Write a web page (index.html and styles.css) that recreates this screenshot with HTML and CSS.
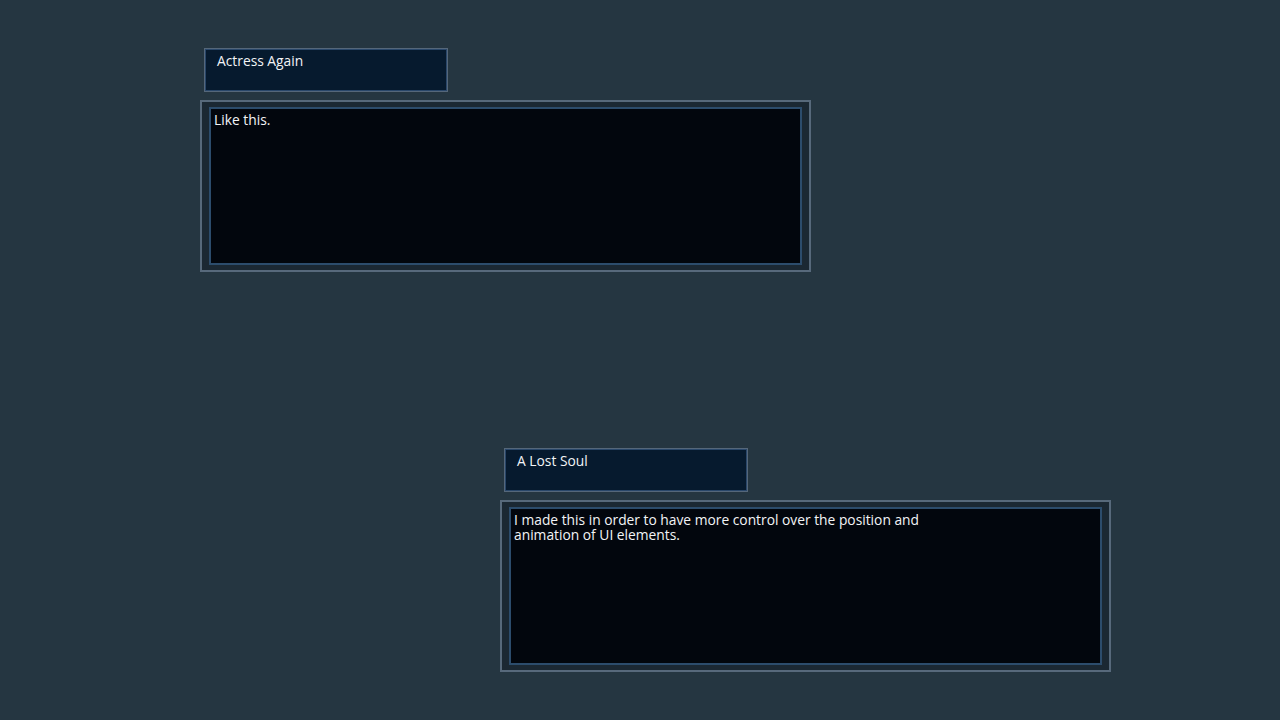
FILE: index.html
```html
<!DOCTYPE html>
<html>
<head>
<meta charset="utf-8">
<link rel="stylesheet" href="styles.css">
</head>
<body>
<main class="scene">
  <section class="dialogue first">
    <div class="name">Actress Again</div>
    <div class="box">
      <div class="text">Like this.</div>
    </div>
  </section>
  <section class="dialogue second">
    <div class="name">A Lost Soul</div>
    <div class="box">
      <div class="text">I made this in order to have more control over the position and<br>animation of UI elements.</div>
    </div>
  </section>
</main>
</body>
</html>
```
FILE: styles.css
```css
html, body {
  margin: 0;
  padding: 0;
  background: #253641;
  width: 1280px;
  height: 720px;
  overflow: hidden;
}
.scene {
  display: flex;
  flex-direction: column;
  padding-top: 48px;
  font-family: "Open Sans", "DejaVu Sans", sans-serif;
  font-size: 13.8px;
  line-height: 15px;
  color: #f2f4f6;
}
.dialogue {
  display: flex;
  flex-direction: column;
  gap: 8px;
}
.first { margin-left: 200px; }
.second { margin-left: 500px; margin-top: 176px; }
.name {
  margin-left: 4px;
  box-sizing: border-box;
  width: 244px;
  height: 44px;
  border: 1px solid #55677a;
  box-shadow: inset 0 0 0 1px #29476a;
  background: #061a2e;
  padding: 4px 12px;
}
.box {
  box-sizing: border-box;
  width: 611px;
  height: 172px;
  border: 2px solid #57697b;
  background: #1b2833;
  padding: 5px 7px;
  display: flex;
}
.text {
  flex: 1;
  border: 2px solid #2c4c6c;
  background: #02060d;
  padding: 3px 3px;
}
```
